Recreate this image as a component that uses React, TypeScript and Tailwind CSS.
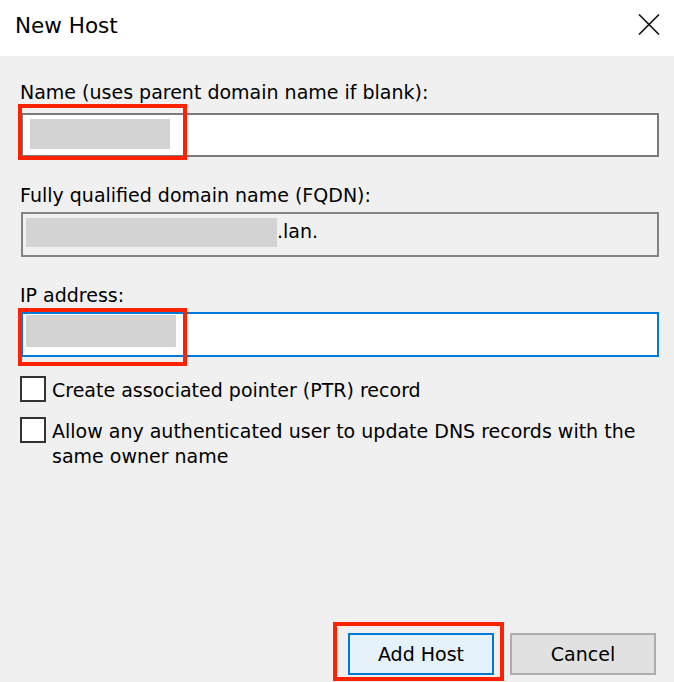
import React from "react"

const font = { fontFamily: '"DejaVu Sans", Verdana, sans-serif' }

function CloseIcon() {
  return (
    <svg width="22" height="21" viewBox="0 0 22 21" fill="none">
      <path d="M1 0.5 L21 20.5 M21 0.5 L1 20.5" stroke="#111" strokeWidth="1.6" />
    </svg>
  )
}

function Redacted({ className }: { className: string }) {
  return <span className={`block bg-[#d3d3d3] ${className}`} />
}

function Highlight({ className }: { className: string }) {
  return <span className={`pointer-events-none absolute border-4 border-[#ff2200] ${className}`} />
}

function CheckRow({ label, className }: { label: string; className?: string }) {
  return (
    <label className={`flex items-start gap-[6px] ${className ?? ""}`}>
      <span className="block h-[26px] w-[26px] shrink-0 border-2 border-[#333333] bg-white" />
      <span className="pt-[2px] leading-[25px]">{label}</span>
    </label>
  )
}

export default function App() {
  return (
    <div className="flex h-[682px] w-[674px] flex-col overflow-hidden text-[19px] text-black" style={font}>
      <div className="flex h-[56px] shrink-0 items-start justify-between bg-white pl-[15px] pr-[14px]">
        <div className="pt-[13px] text-[21.5px] leading-[26px]">New Host</div>
        <div className="pt-[14px]">
          <CloseIcon />
        </div>
      </div>

      <div className="flex flex-1 flex-col bg-[#f0f0f0] pl-[20px] pr-[15px] pt-[24px]">
        <div className="leading-[25px]">Name (uses parent domain name if blank):</div>
        <div className="relative ml-[1px] mt-[8px] h-[44px] border-2 border-[#7a7a7a] bg-white">
          <Redacted className="ml-[7px] mt-[4px] h-[30px] w-[140px]" />
          <Highlight className="-left-[5px] -top-[11px] h-[56px] w-[169px]" />
        </div>

        <div className="mt-[26px] leading-[25px]">Fully qualified domain name (FQDN):</div>
        <div className="ml-[1px] mt-[4px] flex h-[45px] items-start border-2 border-[#838383] bg-[#f0f0f0] pl-[3px] pt-[4px]">
          <Redacted className="h-[29px] w-[251px]" />
          <span className="mt-[1px] leading-[25px]">.lan.</span>
        </div>

        <div className="mt-[26px] leading-[25px]">IP address:</div>
        <div className="relative ml-[1px] mt-[4px] h-[45px] border-2 border-[#0078d7] bg-white">
          <Redacted className="ml-[3px] mt-[1px] h-[32px] w-[150px]" />
          <Highlight className="-left-[5px] -top-[6px] h-[58px] w-[169px]" />
        </div>

        <CheckRow className="mt-[19px]" label="Create associated pointer (PTR) record" />
        <CheckRow className="mt-[14px]" label="Allow any authenticated user to update DNS records with the same owner name" />

        <div className="mt-auto flex justify-end gap-[16px] pb-[7px] pr-[3px]">
          <div className="relative">
            <button className="h-[42px] w-[146px] border-2 border-[#0078d7] bg-[#e5f1fb] leading-[25px]">Add Host</button>
            <Highlight className="-left-[15px] -top-[11px] h-[59px] w-[171px]" />
          </div>
          <button className="h-[42px] w-[146px] border-2 border-[#adadad] bg-[#e1e1e1] leading-[25px]">Cancel</button>
        </div>
      </div>
    </div>
  )
}
